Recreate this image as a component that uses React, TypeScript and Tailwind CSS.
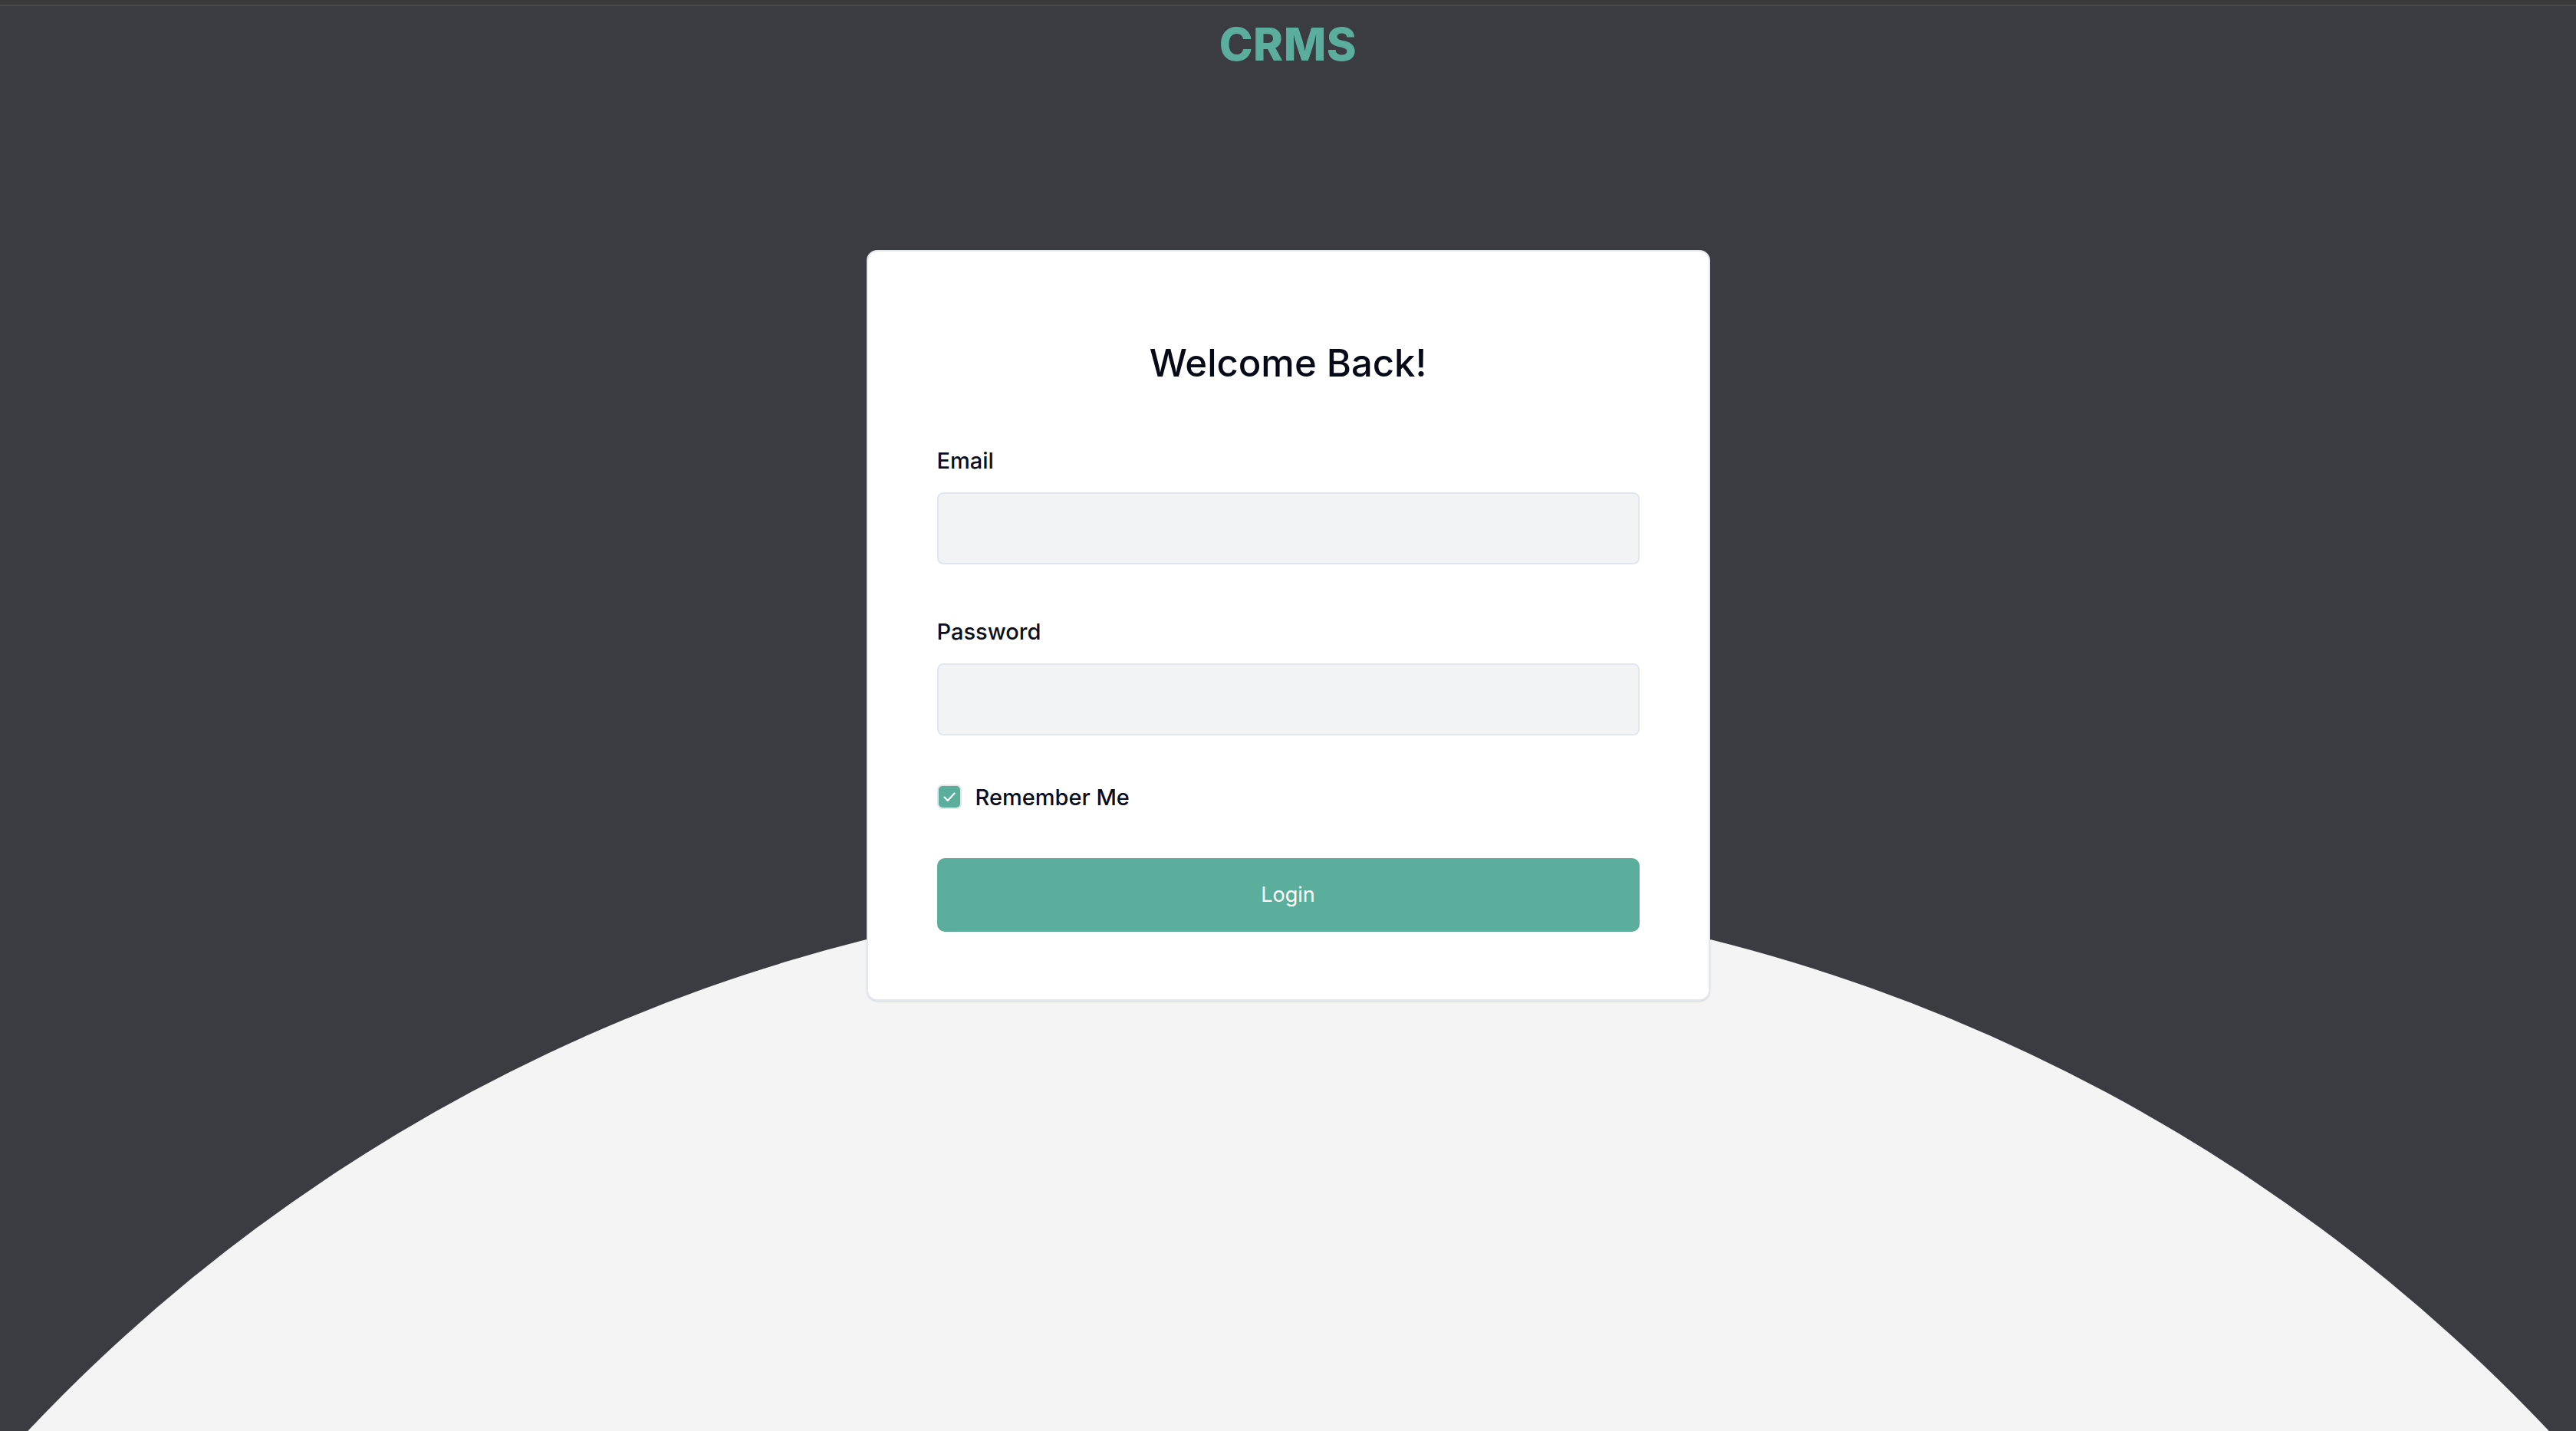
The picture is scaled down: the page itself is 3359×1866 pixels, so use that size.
import { useState } from 'react';

const Login = () => {
  const [remember, setRemember] = useState<boolean>(true);

  return (
    <div className="relative min-h-screen overflow-hidden bg-[#3b3c42] font-['Inter','Liberation_Sans',sans-serif]">
      {/* Background arc */}
      <div className="absolute left-1/2 top-[1157px] h-[4520px] w-[4520px] -translate-x-1/2 rounded-full bg-[#f4f4f5]"></div>

      <div className="relative">
        {/* Top strip */}
        <div className="h-[8px] bg-[#39393a] border-b-2 border-[#4a4a49]"></div>

        {/* Brand */}
        <div className="flex justify-center pt-[20px]">
          <h1 className="text-[59px] leading-none font-extrabold tracking-[0.5px] text-[#5bae9c]">CRMS</h1>
        </div>

        {/* Card */}
        <div className="mx-auto mt-[239px] w-[1100px] rounded-[14px] border-2 border-[#e3e8ef] bg-white px-[90px] pt-[121px] pb-[88px] shadow-sm">
          <h2 className="text-center text-[49px] leading-none font-medium text-[#050a16]">Welcome Back!</h2>

          <div className="mt-[88px]">
            <label className="block text-[29px] leading-none font-medium text-[#0a0f1c]">Email</label>
            <input
              type="email"
              className="mt-[27px] block h-[94px] w-full rounded-[8px] border-2 border-[#e2e7ef] bg-[#f2f3f5] px-5 text-[28px] outline-none"
            />
          </div>

          <div className="mt-[73px]">
            <label className="block text-[29px] leading-none font-medium text-[#0a0f1c]">Password</label>
            <input
              type="password"
              className="mt-[27px] block h-[94px] w-full rounded-[8px] border-2 border-[#e2e7ef] bg-[#f2f3f5] px-5 text-[28px] outline-none"
            />
          </div>

          <label className="mt-[64px] flex items-center gap-[18px] cursor-pointer">
            <span
              onClick={() => setRemember(!remember)}
              className={`flex h-[32px] w-[32px] items-center justify-center rounded-[7px] border-2 ${
                remember ? 'border-[#e2e5ea] bg-[#5bae9c]' : 'border-[#d1d5db] bg-white'
              }`}
            >
              {remember && (
                <svg width="22" height="22" viewBox="0 0 20 20" fill="none">
                  <path d="M4 10.5l4 4 8-8.5" stroke="white" strokeWidth="2" strokeLinecap="round" strokeLinejoin="round" />
                </svg>
              )}
            </span>
            <span className="text-[29px] leading-none font-medium text-[#0a0f1c]">Remember Me</span>
          </label>

          <button className="mt-[64px] flex h-[96px] w-full items-center justify-center rounded-[10px] bg-[#5bae9c] text-[27px] text-white">
            Login
          </button>
        </div>
      </div>
    </div>
  );
};

export default function App() {
  return <Login />;
}
